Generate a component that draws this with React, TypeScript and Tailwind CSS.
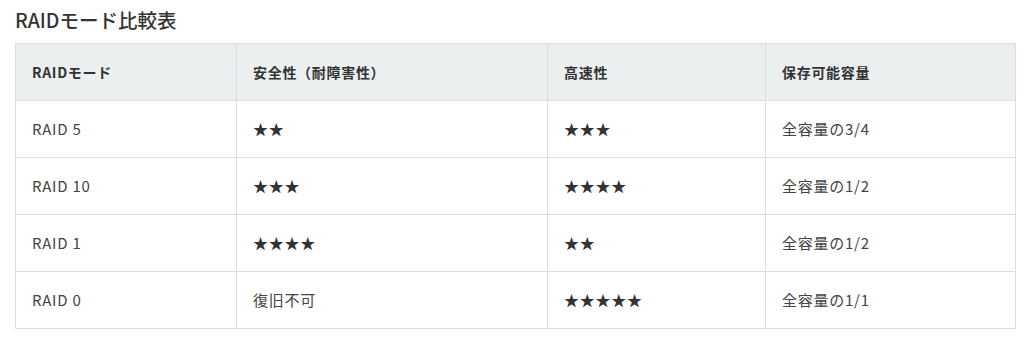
import React from "react";

const rows = [
  ["RAID 5", "★★", "★★★", "全容量の3/4"],
  ["RAID 10", "★★★", "★★★★", "全容量の1/2"],
  ["RAID 1", "★★★★", "★★", "全容量の1/2"],
  ["RAID 0", "復旧不可", "★★★★★", "全容量の1/1"],
];

export default function App() {
  return (
    <div
      className="bg-white w-[1030px] h-[347px] pl-[15px] text-[#333]"
      style={{ fontFamily: '"Noto Sans CJK JP", "Noto Sans", sans-serif' }}
    >
      <h2 className="pt-[6px] h-[43px] text-[19.5px] leading-[28px] font-medium text-[#333]">
        RAIDモード比較表
      </h2>
      <table className="table-fixed border-collapse w-[1000px]">
        <colgroup>
          <col className="w-[221px]" />
          <col className="w-[311px]" />
          <col className="w-[218px]" />
          <col className="w-[250px]" />
        </colgroup>
        <thead>
          <tr className="bg-[#ebeff0] h-[57px]">
            {["RAIDモード", "安全性（耐障害性）", "高速性", "保存可能容量"].map((h) => (
              <th
                key={h}
                className="border border-[#dddddd] text-left font-bold px-4 align-middle text-[14px] tracking-[0.05em] text-[#333]"
              >
                {h}
              </th>
            ))}
          </tr>
        </thead>
        <tbody>
          {rows.map((r) => (
            <tr key={r[0]} className="h-[57px]">
              {r.map((c, i) => (
                <td
                  key={i}
                  className={`border border-[#dddddd] px-4 align-middle text-[15px] tracking-[0.05em] ${
                    c.startsWith("★") ? "text-[#333]" : "text-[#444]"
                  }`}
                >
                  {c}
                </td>
              ))}
            </tr>
          ))}
        </tbody>
      </table>
    </div>
  );
}
